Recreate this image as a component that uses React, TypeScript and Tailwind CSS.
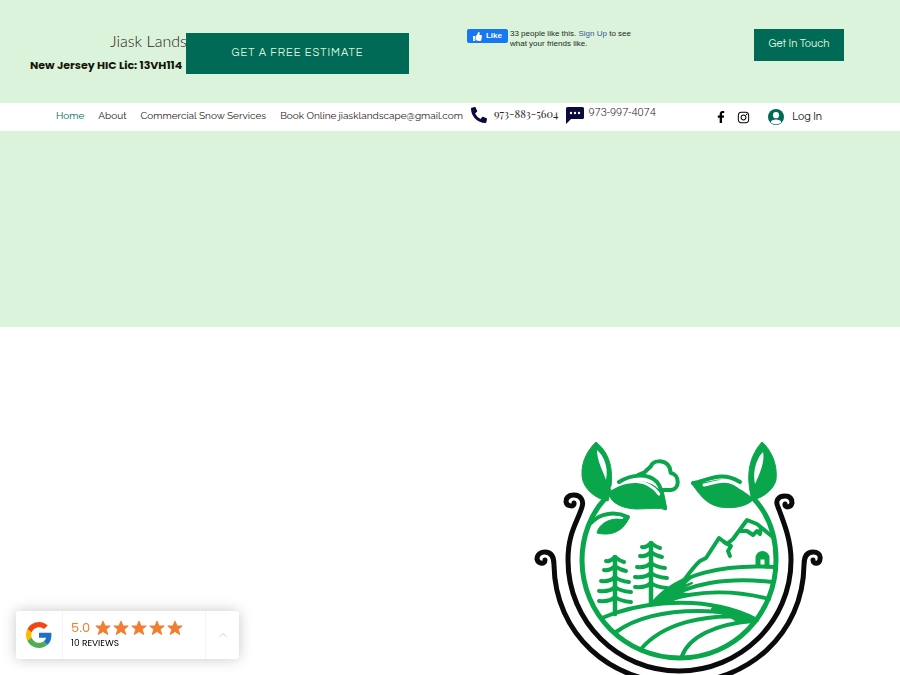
import React from 'react';
import { FaFacebookF, FaInstagram, FaPhoneAlt, FaThumbsUp } from 'react-icons/fa';
import { ChevronUp } from 'lucide-react';

const navLinks = [
    { label: 'Home', active: true },
    { label: 'About', active: false },
    { label: 'Commercial Snow Services', active: false },
    { label: 'Book Online', active: false },
];

const trees = [
    { x: 615, top: 557, bottom: 614 },
    { x: 651, top: 543, bottom: 604 },
];

const tiers = [
    { dy: 4, half: 9 },
    { dy: 13, half: 11 },
    { dy: 24, half: 14 },
    { dy: 34, half: 16 },
    { dy: 44, half: 16 },
];

const ChatIcon = () => (
    <svg viewBox="0 0 18 17" className="h-[17px] w-[18px] shrink-0" aria-hidden="true">
        <path d="M1.5 0h15A1.5 1.5 0 0 1 18 1.500V10.500A1.500 1.500 0 0 1 16.500 12H5L0 17V1.500A1.500 1.500 0 0 1 1.500 0Z" fill="#0a0a3c" />
        <circle cx="5" cy="6" r="1.2" fill="#fff" />
        <circle cx="9" cy="6" r="1.2" fill="#fff" />
        <circle cx="13" cy="6" r="1.2" fill="#fff" />
    </svg>
);

const AvatarIcon = () => (
    <svg viewBox="0 0 16 16" className="h-4 w-4 shrink-0" aria-hidden="true">
        <circle cx="8" cy="8" r="8" fill="#006a56" />
        <circle cx="8" cy="6.200" r="3.100" fill="#fff" />
        <path d="M2.600 13.300C3.200 11.200 5.200 10.400 8 10.400s4.800.8 5.400 2.900A7.200 7.200 0 0 1 8 15.300a7.200 7.200 0 0 1-5.400-2Z" fill="#fff" />
    </svg>
);

const StarIcon = () => (
    <svg viewBox="0 0 16 16" className="h-4 w-4 shrink-0" fill="#f27d30" stroke="#f27d30" strokeLinejoin="round" aria-hidden="true">
        <path d="M8 1.200L10.100 6H15.200L11.200 9.200L12.700 14.500L8 11.400L3.300 14.500L4.800 9.200L0.800 6H5.900Z" />
    </svg>
);

const GoogleIcon = () => (
    <svg viewBox="0 0 48 48" className="h-[26px] w-[26px]" aria-hidden="true">
        <path fill="#f44611" d="M24 9.500c3.540 0 6.710 1.220 9.210 3.600l6.850-6.850C35.900 2.380 30.470 0 24 0 14.620 0 6.510 5.380 2.560 13.220l7.980 6.190C12.430 13.720 17.740 9.500 24 9.500z" />
        <path fill="#1f71c8" d="M46.980 24.550c0-1.570-.15-3.090-.38-4.550H24v9.020h12.940c-.58 2.960-2.260 5.480-4.780 7.180l7.730 6c4.510-4.180 7.090-10.360 7.090-17.650z" />
        <path fill="#fbbc05" d="M10.530 28.590c-.48-1.450-.76-2.990-.76-4.590s.27-3.140.76-4.590l-7.980-6.190C.92 16.460 0 20.120 0 24c0 3.880.92 7.540 2.560 10.780l7.970-6.190z" />
        <path fill="#4caf50" d="M24 48c6.480 0 11.930-2.130 15.890-5.810l-7.730-6c-2.150 1.450-4.920 2.300-8.160 2.300-6.260 0-11.570-4.220-13.470-9.910l-7.980 6.190C6.510 42.620 14.620 48 24 48z" />
    </svg>
);

const LogoDrawing = () => (
    <svg viewBox="530 435 300 240" className="h-[240px] w-[300px]" role="img" aria-label="Landscape emblem">
        {/* Scrolled frame */}
        <g fill="none" stroke="#0b0b0d" strokeWidth="5" strokeLinecap="round" strokeLinejoin="round">
            <path d="M574 503C575 507 567 507 566 502C566 496 570 495 574 495C581 495 584 501 582 507C577 523 568 533 568 560C568 622 618 671 679 671C740 671 791 622 791 560C791 540 784 523 778 507C775 501 778 496 785 496C789 496 792 498 792 503C791 508 784 508 785 504" />
            <path d="M545 560C545 565 538 564 537 559C537 554 541 552 545 552C552 552 554 558 554 565C555 634 610 683 679 683C748 683 803 634 804 565C804 558 806 552 813 552C817 552 821 554 820 559C820 564 813 565 813 560" />
        </g>
        {/* Leaves */}
        <g fill="#0aa64c" stroke="#0aa64c" strokeLinejoin="round">
            <path d="M596 442C612 455 615 475 608 501C596 499 583 489 582 476C581 460 589 449 596 442Z" />
            <path d="M608 493C623 482 646 476 659 490C665 498 667 508 666 510C659 507 650 509 636 509C622 508 612 504 608 493Z" />
            <path d="M762 442C770 449 778 463 776 480C773 491 762 498 752 500C747 481 746 460 762 442Z" />
            <path d="M691 483C700 484 708 482 718 480C730 480 740 490 754 499C747 506 736 509 720 507C704 504 698 491 691 483Z" />
            <path d="M597 533C599 523 611 517 629 518C624 529 614 537 597 533Z" />
        </g>
        <g fill="#fff">
            <path d="M597 450C603 455 609 466 606 480C603 471 597 461 597 450Z" />
            <path d="M763 452C765 461 760 473 755 484C752 471 757 458 763 452Z" />
        </g>
        <g fill="none" stroke="#fff" strokeWidth="3" strokeLinecap="round">
            <path d="M612 488C628 479 647 478 659 494" />
            <path d="M704 485C715 483 727 476 741 488" />
            <path d="M600 523C608 517 616 517 622 518" strokeWidth="2" />
        </g>
        {/* Circle, stems and cloud */}
        <g fill="none" stroke="#0aa64c" strokeWidth="5" strokeLinecap="round" strokeLinejoin="round">
            <path d="M604 500C591 514 582 536 582 560C582 614 625 658 680 658C734 658 776 614 776 560C776 535 769 515 754 499" />
            <path d="M638 475L645 472C648 468 650 468 651 466C653 460 663 460 668 465C671 468 670 473 671 473C680 475 680 489 671 490H662" strokeWidth="4" />
            <path d="M591 523C600 513 615 511 628 517" strokeWidth="4" />
            <path d="M619 482C632 474 648 473 657 482C663 489 663 499 665 508" strokeWidth="4" />
            <path d="M693 483C707 481 721 470 740 482" strokeWidth="4" />
        </g>
        {/* Trees */}
        <g fill="none" stroke="#0aa64c" strokeWidth="4.500" strokeLinecap="round" strokeLinejoin="round">
            {trees.map((tree) => (
                <g key={tree.x}>
                    <path d={`M${tree.x} ${tree.top}V${tree.bottom}`} />
                    {tiers.map((tier) => (
                        <path
                            key={tier.dy}
                            strokeWidth="4"
                            d={`M${tree.x - tier.half} ${tree.top + tier.dy}Q${tree.x - 5} ${tree.top + tier.dy + 1} ${tree.x} ${tree.top + tier.dy - 4}Q${tree.x + 5} ${tree.top + tier.dy} ${tree.x + tier.half} ${tree.top + tier.dy + 1}`}
                        />
                    ))}
                </g>
            ))}
        </g>
        {/* Mountains and fields */}
        <g fill="none" stroke="#0aa64c" strokeWidth="4" strokeLinecap="round" strokeLinejoin="round">
            <path d="M680 585C687 577 692 568 700 561L706 558L719 538L727 544L733 539L747 520L757 524L774 538" />
            <path d="M724 542L731 546L728 551L730 556" />
            <path d="M740 531L747 531L753 535L757 531L760 534L761 528" />
            <path d="M758 565V558C758 552 767 552 767 558V566M758 557H767" strokeWidth="5" />
            <path d="M653 603C678 573 725 564 774 567" />
            <path d="M660 602C690 583 725 577 773 582" />
            <path d="M665 601C698 590 735 590 769 599" />
            <path d="M602 618C639 602 687 599 721 607C735 610 746 614 757 620" />
            <path d="M616 632C643 613 685 608 732 613" />
            <path d="M641 649C663 623 705 614 745 617" />
            <path d="M682 656C689 637 715 624 753 621" />
            <path d="M651 604L682 581L693 576L681 587L692 583L675 592L687 594L673 600Z" fill="#0aa64c" strokeWidth="2" />
            <path d="M713 609C732 608 744 614 756 620L738 621C733 617 729 613 713 611Z" fill="#0aa64c" />
        </g>
    </svg>
);

const App: React.FC = () => {
    return (
        <div className="min-h-screen bg-white font-['Liberation_Sans',sans-serif] text-[#2b2118]">
            {/* Header */}
            <header className="flex items-start bg-[#dbf3db] pt-7 pb-[28px] pl-[30px] pr-14">
                <div className="mt-[3px] w-[156px] shrink-0 overflow-hidden whitespace-nowrap">
                    <h1 className="pl-20 font-[Lato,sans-serif] text-base leading-5 font-light">Jiask Lands</h1>
                    <p className="mt-1 font-[Poppins,Inter,sans-serif] text-[11px] leading-5 font-bold text-[#151507]">New Jersey HIC Lic: 13VH114</p>
                </div>
                <button className="mt-[5px] h-[41px] w-[223px] shrink-0 bg-[#006a56] font-[Questrial,Inter,sans-serif] text-[11px] tracking-[1px] text-[#dbf3db]">
                    GET A FREE ESTIMATE
                </button>
                <div className="ml-[58px] flex items-start gap-[2px]">
                    <button className="mt-px flex h-[14px] w-[41px] shrink-0 items-center justify-center gap-1 rounded-[2px] bg-[#1877f2] text-[8px] leading-none font-bold text-white">
                        <FaThumbsUp size={9} />
                        Like
                    </button>
                    <p className="w-[125px] pt-px text-[8px] leading-[10px] text-[#1c2b1e]">
                        33 people like this. <a href="#signup" className="text-[#385898]">Sign Up</a> to see what your friends like.
                    </p>
                </div>
                <button className="mt-px ml-auto h-8 w-[90px] shrink-0 bg-[#006a56] pb-px font-[Questrial,Inter,sans-serif] text-[11px] text-[#dbf3db]">
                    Get In Touch
                </button>
            </header>

            {/* Navigation */}
            <nav className="flex h-7 items-center bg-white pr-[78px] pl-14 font-[Raleway,'Open_Sans',sans-serif] text-[10px] leading-4 whitespace-nowrap">
                <div className="flex gap-[14px] pb-0.5">
                    {navLinks.map((link) => (
                        <a key={link.label} href="#" className={link.active ? 'text-[#006a56]' : ''}>
                            {link.label}
                        </a>
                    ))}
                </div>
                <a href="mailto:jiasklandscape@gmail.com" className="ml-0.5 pb-0.5">jiasklandscape@gmail.com</a>
                <a href="tel:9738835604" className="ml-2 flex items-center gap-[7px] pb-1 font-['Playfair_Display','Liberation_Serif',serif] text-[11px]">
                    <FaPhoneAlt size={16} color="#0a0a3c" />
                    <span className="pb-0.5">973-883-5604</span>
                </a>
                <a href="sms:9739974074" className="ml-2 flex items-center gap-1 pb-1 font-[Roboto,sans-serif] text-[11px] font-light">
                    <ChatIcon />
                    <span className="pb-1">973-997-4074</span>
                </a>
                <div className="ml-auto flex items-center gap-[10px]">
                    <a href="#facebook" aria-label="Facebook"><FaFacebookF size={12} color="#000" /></a>
                    <a href="#instagram" aria-label="Instagram"><FaInstagram size={13} color="#000" /></a>
                    <button className="ml-2 flex items-center gap-2 font-[Questrial,Inter,sans-serif] text-[11px]">
                        <AvatarIcon />
                        Log In
                    </button>
                </div>
            </nav>

            <section className="h-[196px] bg-[#dbf3db]" />

            <main className="flex justify-end pt-[108px] pr-[70px]">
                <LogoDrawing />
            </main>

            {/* Reviews badge */}
            <aside className="fixed bottom-4 left-4 flex h-12 w-[223px] items-stretch rounded-[3px] bg-white font-[Poppins,Inter,sans-serif] shadow-[0_0_14px_rgba(0,0,0,0.22)]">
                <div className="flex w-[47px] items-center justify-center border-r border-gray-100">
                    <GoogleIcon />
                </div>
                <div className="flex flex-1 flex-col justify-center pl-2">
                    <div className="flex items-center gap-[5px] text-[#f27d30]">
                        <span className="text-[13px] leading-4">5.0</span>
                        <div className="flex gap-[2px]">
                            {[1, 2, 3, 4, 5].map((star) => (
                                <StarIcon key={star} />
                            ))}
                        </div>
                    </div>
                    <span className="text-[9px] leading-[14px] text-black">10 REVIEWS</span>
                </div>
                <button aria-label="Expand reviews" className="flex w-[34px] items-center justify-center border-l border-gray-100 text-gray-200">
                    <ChevronUp size={14} strokeWidth={2} />
                </button>
            </aside>
        </div>
    );
};

export default App;
